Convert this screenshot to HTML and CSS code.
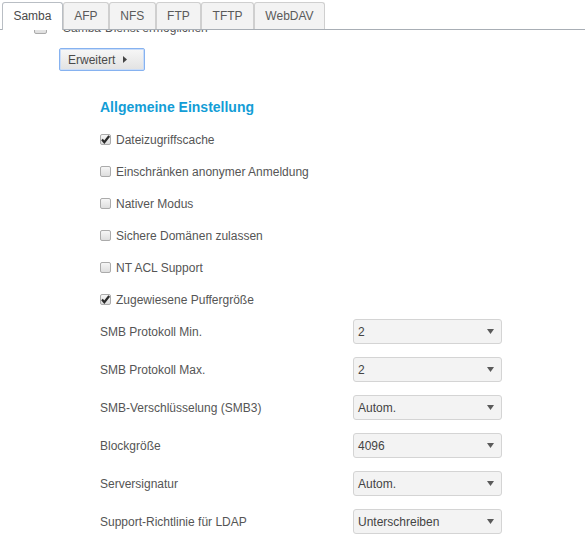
FILE: index.html
```html
<!DOCTYPE html>
<html lang="de">
<head>
<meta charset="utf-8">
<title>Samba</title>
<link rel="stylesheet" href="styles.css">
</head>
<body>
<div class="tabs">
  <div class="tab active">Samba</div>
  <div class="tab">AFP</div>
  <div class="tab">NFS</div>
  <div class="tab">FTP</div>
  <div class="tab">TFTP</div>
  <div class="tab">WebDAV</div>
</div>
<div class="panel">
  <div class="scroll">
    <div class="enable-row">
      <span class="cb cb-big"></span>
      <span class="enable-label">Samba-Dienst ermöglichen</span>
    </div>
    <div class="btn-wrap">
      <button class="btn">Erweitert <svg class="btn-arrow" width="4" height="7" viewBox="0 0 4 7"><path d="M0 0 L4 3.5 L0 7 Z" fill="#444"/></svg></button>
    </div>
    <div class="section">
      <h2 class="heading">Allgemeine Einstellung</h2>
      <div class="checks">
        <div class="check-row"><span class="cb checked"><svg viewBox="0 0 11 11" width="11" height="11"><path d="M2 5.6 L4.3 8.2 L9.2 2" fill="none" stroke="#2b2b2b" stroke-width="2.2"/></svg></span><span class="check-label">Dateizugriffscache</span></div>
        <div class="check-row"><span class="cb"></span><span class="check-label">Einschränken anonymer Anmeldung</span></div>
        <div class="check-row"><span class="cb"></span><span class="check-label">Nativer Modus</span></div>
        <div class="check-row"><span class="cb"></span><span class="check-label">Sichere Domänen zulassen</span></div>
        <div class="check-row"><span class="cb"></span><span class="check-label">NT ACL Support</span></div>
        <div class="check-row"><span class="cb checked"><svg viewBox="0 0 11 11" width="11" height="11"><path d="M2 5.6 L4.3 8.2 L9.2 2" fill="none" stroke="#2b2b2b" stroke-width="2.2"/></svg></span><span class="check-label">Zugewiesene Puffergröße</span></div>
      </div>
      <div class="selects">
        <div class="select-row"><span class="select-label">SMB Protokoll Min.</span><div class="select"><span>2</span><svg class="sel-arrow" width="7" height="5" viewBox="0 0 7 5"><path d="M0 0 H7 L3.5 5 Z" fill="#5a5a5a"/></svg></div></div>
        <div class="select-row"><span class="select-label">SMB Protokoll Max.</span><div class="select"><span>2</span><svg class="sel-arrow" width="7" height="5" viewBox="0 0 7 5"><path d="M0 0 H7 L3.5 5 Z" fill="#5a5a5a"/></svg></div></div>
        <div class="select-row"><span class="select-label">SMB-Verschlüsselung (SMB3)</span><div class="select"><span>Autom.</span><svg class="sel-arrow" width="7" height="5" viewBox="0 0 7 5"><path d="M0 0 H7 L3.5 5 Z" fill="#5a5a5a"/></svg></div></div>
        <div class="select-row"><span class="select-label">Blockgröße</span><div class="select"><span>4096</span><svg class="sel-arrow" width="7" height="5" viewBox="0 0 7 5"><path d="M0 0 H7 L3.5 5 Z" fill="#5a5a5a"/></svg></div></div>
        <div class="select-row"><span class="select-label">Serversignatur</span><div class="select"><span>Autom.</span><svg class="sel-arrow" width="7" height="5" viewBox="0 0 7 5"><path d="M0 0 H7 L3.5 5 Z" fill="#5a5a5a"/></svg></div></div>
        <div class="select-row"><span class="select-label">Support-Richtlinie für LDAP</span><div class="select"><span>Unterschreiben</span><svg class="sel-arrow" width="7" height="5" viewBox="0 0 7 5"><path d="M0 0 H7 L3.5 5 Z" fill="#5a5a5a"/></svg></div></div>
      </div>
    </div>
  </div>
</div>
</body>
</html>
```

FILE: styles.css
```css
* { box-sizing: border-box; }
html, body {
  margin: 0;
  padding: 0;
  background: #fff;
  font-family: "Liberation Sans", Arial, sans-serif;
  font-size: 12px;
  color: #555;
  width: 585px;
  height: 552px;
  overflow: hidden;
}
.tabs {
  display: flex;
  height: 30px;
  padding: 2px 0 0 2px;
  border-bottom: 1px solid #a8aeb5;
  position: relative;
  z-index: 2;
  background: #fff;
}
.tab {
  height: 27px;
  line-height: 26px;
  padding: 0 10.4px;
  border: 1px solid #cfcfcf;
  border-bottom: none;
  border-radius: 3px 3px 0 0;
  background: #f3f3f3;
  color: #5a5a5a;
}
.tab.active {
  background: #fff;
  height: 28px;
  border-color: #b9bec4;
  color: #4a4a4a;
}
.panel {
  height: 522px;
  overflow: hidden;
}
.scroll {
  margin-top: -13px;
}
.enable-row {
  height: 22px;
  display: flex;
  align-items: center;
  padding-left: 34px;
}
.cb {
  display: inline-block;
  width: 11px;
  height: 11px;
  border: 1px solid #ababab;
  border-radius: 2px;
  background: linear-gradient(#f6f6f6, #dedede);
  flex: none;
  position: relative;
}
.cb svg {
  position: absolute;
  left: -1px;
  top: -1px;
}
.cb-big {
  width: 13px;
  height: 12px;
}
.enable-label {
  margin-left: 16px;
  line-height: 14px;
  color: #555;
}
.btn-wrap {
  margin-top: 9px;
  padding-left: 59px;
}
.btn {
  display: flex;
  align-items: center;
  width: 86px;
  height: 23px;
  padding: 0 0 0 8px;
  border: 1px solid #86b2f0;
  box-shadow: 0 0 0 1px #c9dcf8 inset;
  border-radius: 2px;
  background: linear-gradient(#f7f7f7, #e2e2e2);
  font-family: "Liberation Sans", Arial, sans-serif;
  font-size: 12px;
  color: #4a4a4a;
}
.btn-arrow {
  margin-left: 8px;
}
.section {
  padding-left: 100px;
}
.heading {
  margin: 28px 0 0 0;
  font-size: 14px;
  line-height: 16px;
  font-weight: bold;
  color: #139dd6;
}
.checks {
  margin-top: 9px;
}
.check-row {
  height: 32px;
  display: flex;
  align-items: center;
}
.check-row .cb {
  margin-top: -1px;
}
.check-label {
  margin-left: 5px;
  line-height: 14px;
}
.selects {
  margin-top: 3px;
  display: flex;
  flex-direction: column;
  gap: 13px;
}
.select-row {
  display: flex;
  align-items: center;
  height: 25px;
}
.select-label {
  width: 253px;
  flex: none;
}
.select {
  width: 149px;
  height: 25px;
  border: 1px solid #d4d4d4;
  border-radius: 3px;
  background: #f3f3f3;
  display: flex;
  align-items: center;
  justify-content: space-between;
  padding: 0 7px 0 4px;
  color: #444;
}
```
